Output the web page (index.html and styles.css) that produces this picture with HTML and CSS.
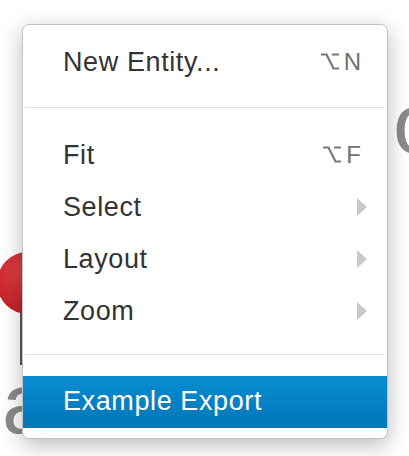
FILE: index.html
```html
<!DOCTYPE html>
<html>
<head>
<meta charset="utf-8">
<link rel="stylesheet" href="styles.css">
</head>
<body>
<div class="canvas">
  <div class="bg-dot"></div>
  <div class="bg-stem"></div>
  <div class="bg-text bg-a">a</div>
  <div class="bg-text bg-lo">lo</div>

  <div class="menu">
    <div class="item">
      <span class="label">New Entity...</span>
      <span class="shortcut"><svg class="opt" width="18" height="17" viewBox="0 0 18 17"><path d="M0 1.5H5.5L12.5 15.5H18M11 1.5H18" fill="none" stroke="#777" stroke-width="2.2"/></svg>N</span>
    </div>
    <div class="sep sep-first"></div>
    <div class="item">
      <span class="label">Fit</span>
      <span class="shortcut"><svg class="opt" width="18" height="17" viewBox="0 0 18 17"><path d="M0 1.5H5.5L12.5 15.5H18M11 1.5H18" fill="none" stroke="#777" stroke-width="2.2"/></svg>F</span>
    </div>
    <div class="item">
      <span class="label">Select</span>
      <span class="arrow"></span>
    </div>
    <div class="item">
      <span class="label">Layout</span>
      <span class="arrow"></span>
    </div>
    <div class="item">
      <span class="label">Zoom</span>
      <span class="arrow"></span>
    </div>
    <div class="sep"></div>
    <div class="item active">
      <span class="label">Example Export</span>
    </div>
  </div>
</div>
</body>
</html>
```

FILE: styles.css
```css
html, body {
  margin: 0;
  padding: 0;
  background: #ffffff;
}

body {
  font-family: "Liberation Sans", Arial, sans-serif;
  width: 409px;
  height: 456px;
  overflow: hidden;
}

.canvas {
  position: relative;
  width: 409px;
  height: 456px;
  overflow: hidden;
}

.bg-dot {
  position: absolute;
  left: -3px;
  top: 252px;
  width: 62px;
  height: 62px;
  border-radius: 50%;
  background: radial-gradient(circle at 40% 30%, #e0404a 0%, #cf2a33 45%, #b01d24 100%);
}

.bg-stem {
  position: absolute;
  left: 20px;
  top: 313px;
  width: 3px;
  height: 52px;
  background: #5a5a5a;
}

.bg-text {
  position: absolute;
  color: #8a8a8a;
  font-family: "Liberation Sans", Arial, sans-serif;
  font-size: 86px;
  line-height: 1;
}

.bg-a {
  left: 2px;
  top: 360px;
}

.bg-lo {
  left: 374px;
  top: 80px;
}

.menu {
  position: absolute;
  left: 22px;
  top: 24px;
  width: 364px;
  border: 1px solid #c2c2c2;
  border-radius: 7px;
  background: #ffffff;
  box-shadow: 0 6px 22px rgba(0, 0, 0, 0.28);
  padding: 12px 0 10px;
  display: flex;
  flex-direction: column;
}

.item {
  height: 52px;
  display: flex;
  align-items: center;
  justify-content: space-between;
  padding: 0 20px 0 40px;
  color: #333333;
  font-size: 27px;
  letter-spacing: 0.6px;
}

.label {
  line-height: 1;
  position: relative;
  top: -1px;
}

.shortcut {
  display: flex;
  align-items: center;
  gap: 5px;
  margin-right: 6px;
  color: #707070;
  font-size: 24px;
  letter-spacing: 0;
  line-height: 1;
  position: relative;
  top: -1px;
}

.opt {
  display: block;
  margin-top: -1px;
}

.arrow {
  width: 0;
  height: 0;
  border-left: 10px solid #c9c9c9;
  border-top: 9px solid transparent;
  border-bottom: 9px solid transparent;
  margin-top: -3px;
}

.sep {
  height: 1px;
  background: #e0e0e0;
  margin: 16px 2px 21px;
}

.sep-first {
  margin: 18px 2px 22px;
}

.item.active {
  background: linear-gradient(#0a8cd2, #0077b8);
  color: #ffffff;
}
```
